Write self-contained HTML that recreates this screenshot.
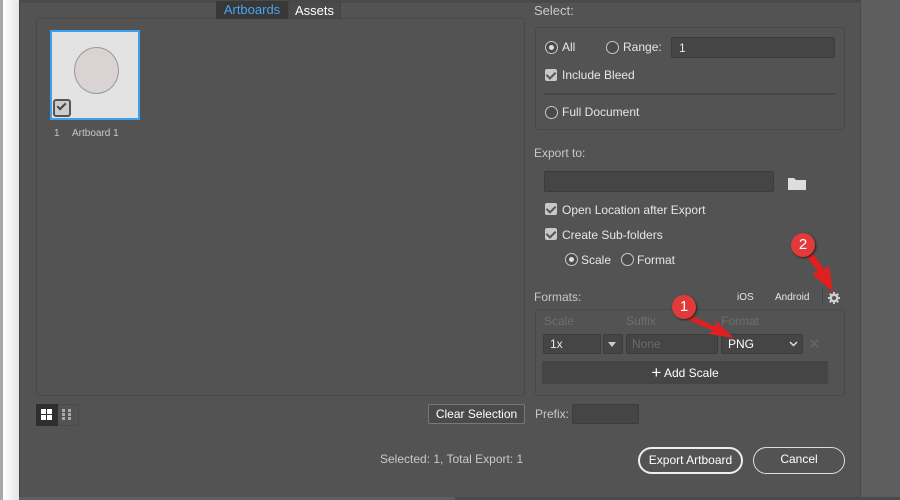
<!DOCTYPE html>
<html><head><style>
*{margin:0;padding:0;box-sizing:border-box}
body{width:900px;height:500px;overflow:hidden;background:#5e5e5e;font-family:"Liberation Sans",sans-serif;font-size:12px;color:#e6e6e6;position:relative}
.a{position:absolute}
.lbl{color:#c8c8c8}
.box{border:1px solid #494949;border-radius:3px}
.inp{background:#454545;border:1px solid #3c3c3c;border-radius:2px}
.rad{width:13px;height:13px;border:1px solid #c8c8c8;border-radius:50%;background:#4a4a4a}
.rad.on::after{content:"";position:absolute;left:3px;top:3px;width:5px;height:5px;border-radius:50%;background:#ddd}
.chk{width:12px;height:12px;background:#c8c8c8;border-radius:2px}
.chk::after{content:"";position:absolute;left:3px;top:1px;width:4px;height:7px;border:solid #555;border-width:0 2px 2px 0;transform:rotate(45deg)}
.btn{border:2px solid #eee;border-radius:14px;text-align:center;color:#fff;font-size:12px;line-height:22px}
.badge{width:24px;height:24px;border-radius:50%;background:#e03a3a;color:#fff;font-size:15px;text-align:center;line-height:24px;box-shadow:1px 1px 2px #222}
</style></head><body>
<div class="a" style="left:0;top:0;width:3px;height:500px;background:#a8a8a8"></div>
<div class="a" style="left:3px;top:0;width:16px;height:500px;background:linear-gradient(90deg,#fff,#e4e4e4)"></div>
<div class="a" style="left:19px;top:0;width:842px;height:497px;background:#535353;border-left:1px solid #444;border-right:1px solid #484848"></div>
<div class="a" style="left:19px;top:0;width:842px;height:3px;background:#4a4a4a"></div>
<div class="a" style="left:455px;top:497px;width:445px;height:3px;background:#4a4a4a"></div>

<div class="a box" style="left:36px;top:18px;width:489px;height:378px"></div>
<div class="a" style="left:216px;top:1px;width:72px;height:18px;background:#383838;color:#4aa3f0;font-size:13px;text-align:center;line-height:18px">Artboards</div>
<div class="a" style="left:288px;top:1px;width:53px;height:18px;background:#4a4a4a;border:1px solid #444;color:#fff;font-size:13px;text-align:center;line-height:17px">Assets</div>
<div class="a" style="left:50px;top:30px;width:90px;height:90px;border:2px solid #3d9ff0;background:#e3e3e3"></div>
<div class="a" style="left:74px;top:47px;width:45px;height:47px;border-radius:50%;background:#dad3d3;border:1px solid #999"></div>
<div class="a" style="left:53px;top:99px;width:18px;height:18px;border:2px solid #555;border-radius:3px;background:#ccc"></div>
<div class="a" style="left:59px;top:101px;width:5px;height:9px;border:solid #444;border-width:0 2px 2px 0;transform:rotate(45deg)"></div>
<div class="a lbl" style="left:54px;top:128px;font-size:10px">1</div>
<div class="a lbl" style="left:72px;top:128px;font-size:10px">Artboard 1</div>

<div class="a" style="left:36px;top:404px;width:43px;height:22px;border:1px solid #4a4a4a;border-radius:2px"></div>
<div class="a" style="left:36px;top:404px;width:22px;height:22px;background:#2e2e2e"></div>
<svg class="a" style="left:40px;top:408px" width="36" height="14"><g fill="#fff"><rect x="1" y="1" width="5" height="5"/><rect x="7" y="1" width="5" height="5"/><rect x="1" y="7" width="5" height="5"/><rect x="7" y="7" width="5" height="5"/></g><g fill="#aaa"><rect x="22" y="1" width="3" height="3"/><rect x="22" y="5" width="3" height="3"/><rect x="22" y="9" width="3" height="3"/><rect x="28" y="1" width="3" height="3"/><rect x="28" y="5" width="3" height="3"/><rect x="28" y="9" width="3" height="3"/></g></svg>

<div class="a" style="left:428px;top:404px;width:97px;height:20px;border:1px solid #777;border-radius:2px;background:#4a4a4a;text-align:center;line-height:18px;color:#fff">Clear Selection</div>
<div class="a lbl" style="left:535px;top:407px">Prefix:</div>
<div class="a inp" style="left:572px;top:404px;width:67px;height:20px"></div>
<div class="a lbl" style="left:380px;top:452px">Selected: 1, Total Export: 1</div>
<div class="a btn" style="left:638px;top:447px;width:105px;height:27px">Export Artboard</div>
<div class="a btn" style="left:753px;top:447px;width:92px;height:27px;border-color:#ddd;border-width:1px">Cancel</div>

<div class="a lbl" style="left:534px;top:3px;font-size:13px">Select:</div>
<div class="a box" style="left:535px;top:27px;width:310px;height:103px"></div>
<div class="a rad on" style="left:545px;top:41px"></div><div class="a" style="left:562px;top:40px">All</div>
<div class="a rad" style="left:606px;top:41px"></div><div class="a" style="left:623px;top:40px">Range:</div>
<div class="a inp" style="left:671px;top:37px;width:164px;height:21px;padding:3px 7px">1</div>
<div class="a chk" style="left:545px;top:69px"></div><div class="a" style="left:562px;top:68px">Include Bleed</div>
<div class="a" style="left:544px;top:93px;width:291px;height:2px;background:#474747"></div>
<div class="a rad" style="left:545px;top:106px"></div><div class="a" style="left:562px;top:105px">Full Document</div>

<div class="a lbl" style="left:534px;top:146px">Export to:</div>
<div class="a inp" style="left:544px;top:171px;width:230px;height:21px"></div>
<svg class="a" style="left:788px;top:176px" width="18" height="14"><path d="M0 2h6l2 2h10v10H0z" fill="#ddd"/></svg>
<div class="a chk" style="left:545px;top:203px"></div><div class="a" style="left:562px;top:203px">Open Location after Export</div>
<div class="a chk" style="left:545px;top:228px"></div><div class="a" style="left:562px;top:228px">Create Sub-folders</div>
<div class="a rad on" style="left:565px;top:253px"></div><div class="a" style="left:581px;top:253px">Scale</div>
<div class="a rad" style="left:621px;top:253px"></div><div class="a" style="left:637px;top:253px">Format</div>

<div class="a lbl" style="left:534px;top:290px">Formats:</div>
<div class="a" style="left:737px;top:292px;font-size:10px">iOS</div>
<div class="a" style="left:775px;top:292px;font-size:10px">Android</div>
<div class="a" style="left:822px;top:287px;width:1px;height:18px;background:#444"></div>
<svg class="a" style="left:827px;top:291px" width="14" height="14" viewBox="0 0 14 14"><g fill="#ccc"><circle cx="7" cy="7" r="4.5"/><rect x="6" y="1" width="2" height="12"/><rect x="1" y="6" width="12" height="2"/><rect x="6" y="1" width="2" height="12" transform="rotate(45 7 7)"/><rect x="6" y="1" width="2" height="12" transform="rotate(-45 7 7)"/></g><circle cx="7" cy="7" r="2" fill="#535353"/></svg>
<div class="a box" style="left:535px;top:309px;width:310px;height:87px"></div>
<div class="a" style="left:544px;top:314px;color:#6e6e6e">Scale</div>
<div class="a" style="left:626px;top:314px;color:#6e6e6e">Suffix</div>
<div class="a" style="left:721px;top:314px;color:#6e6e6e">Format</div>
<div class="a inp" style="left:543px;top:334px;width:58px;height:20px;padding:2px 6px">1x</div>
<div class="a inp" style="left:603px;top:334px;width:20px;height:20px"></div>
<div class="a" style="left:608px;top:342px;border:4px solid transparent;border-top:5px solid #ccc"></div>
<div class="a inp" style="left:626px;top:334px;width:92px;height:20px;padding:2px 5px;color:#6a6a6a">None</div>
<div class="a inp" style="left:721px;top:334px;width:82px;height:20px;padding:2px 6px;color:#fff">PNG</div>
<svg class="a" style="left:789px;top:341px" width="9" height="6"><path d="M1 1l3.5 3.5L8 1" stroke="#ddd" stroke-width="1.5" fill="none"/></svg>
<div class="a" style="left:808px;top:335px;color:#666;font-size:15px">✕</div>
<div class="a" style="left:542px;top:361px;width:286px;height:23px;background:#454545;text-align:center;line-height:23px;color:#fff"><span style="font-size:17px;vertical-align:-1px">+</span> Add Scale</div>

<svg class="a" style="left:660px;top:230px" width="190" height="120"><g fill="#e02020"><path d="M28 84 L56 97 L55 90 L74 108 L48 104 L54 101 L26 89 Z"/><path d="M142 20 L158 42 L152 44 L173 62 L169 36 L164 39 L148 16 Z"/></g></svg>
<div class="a badge" style="left:672px;top:295px">1</div>
<div class="a badge" style="left:791px;top:233px">2</div>
</body></html>
